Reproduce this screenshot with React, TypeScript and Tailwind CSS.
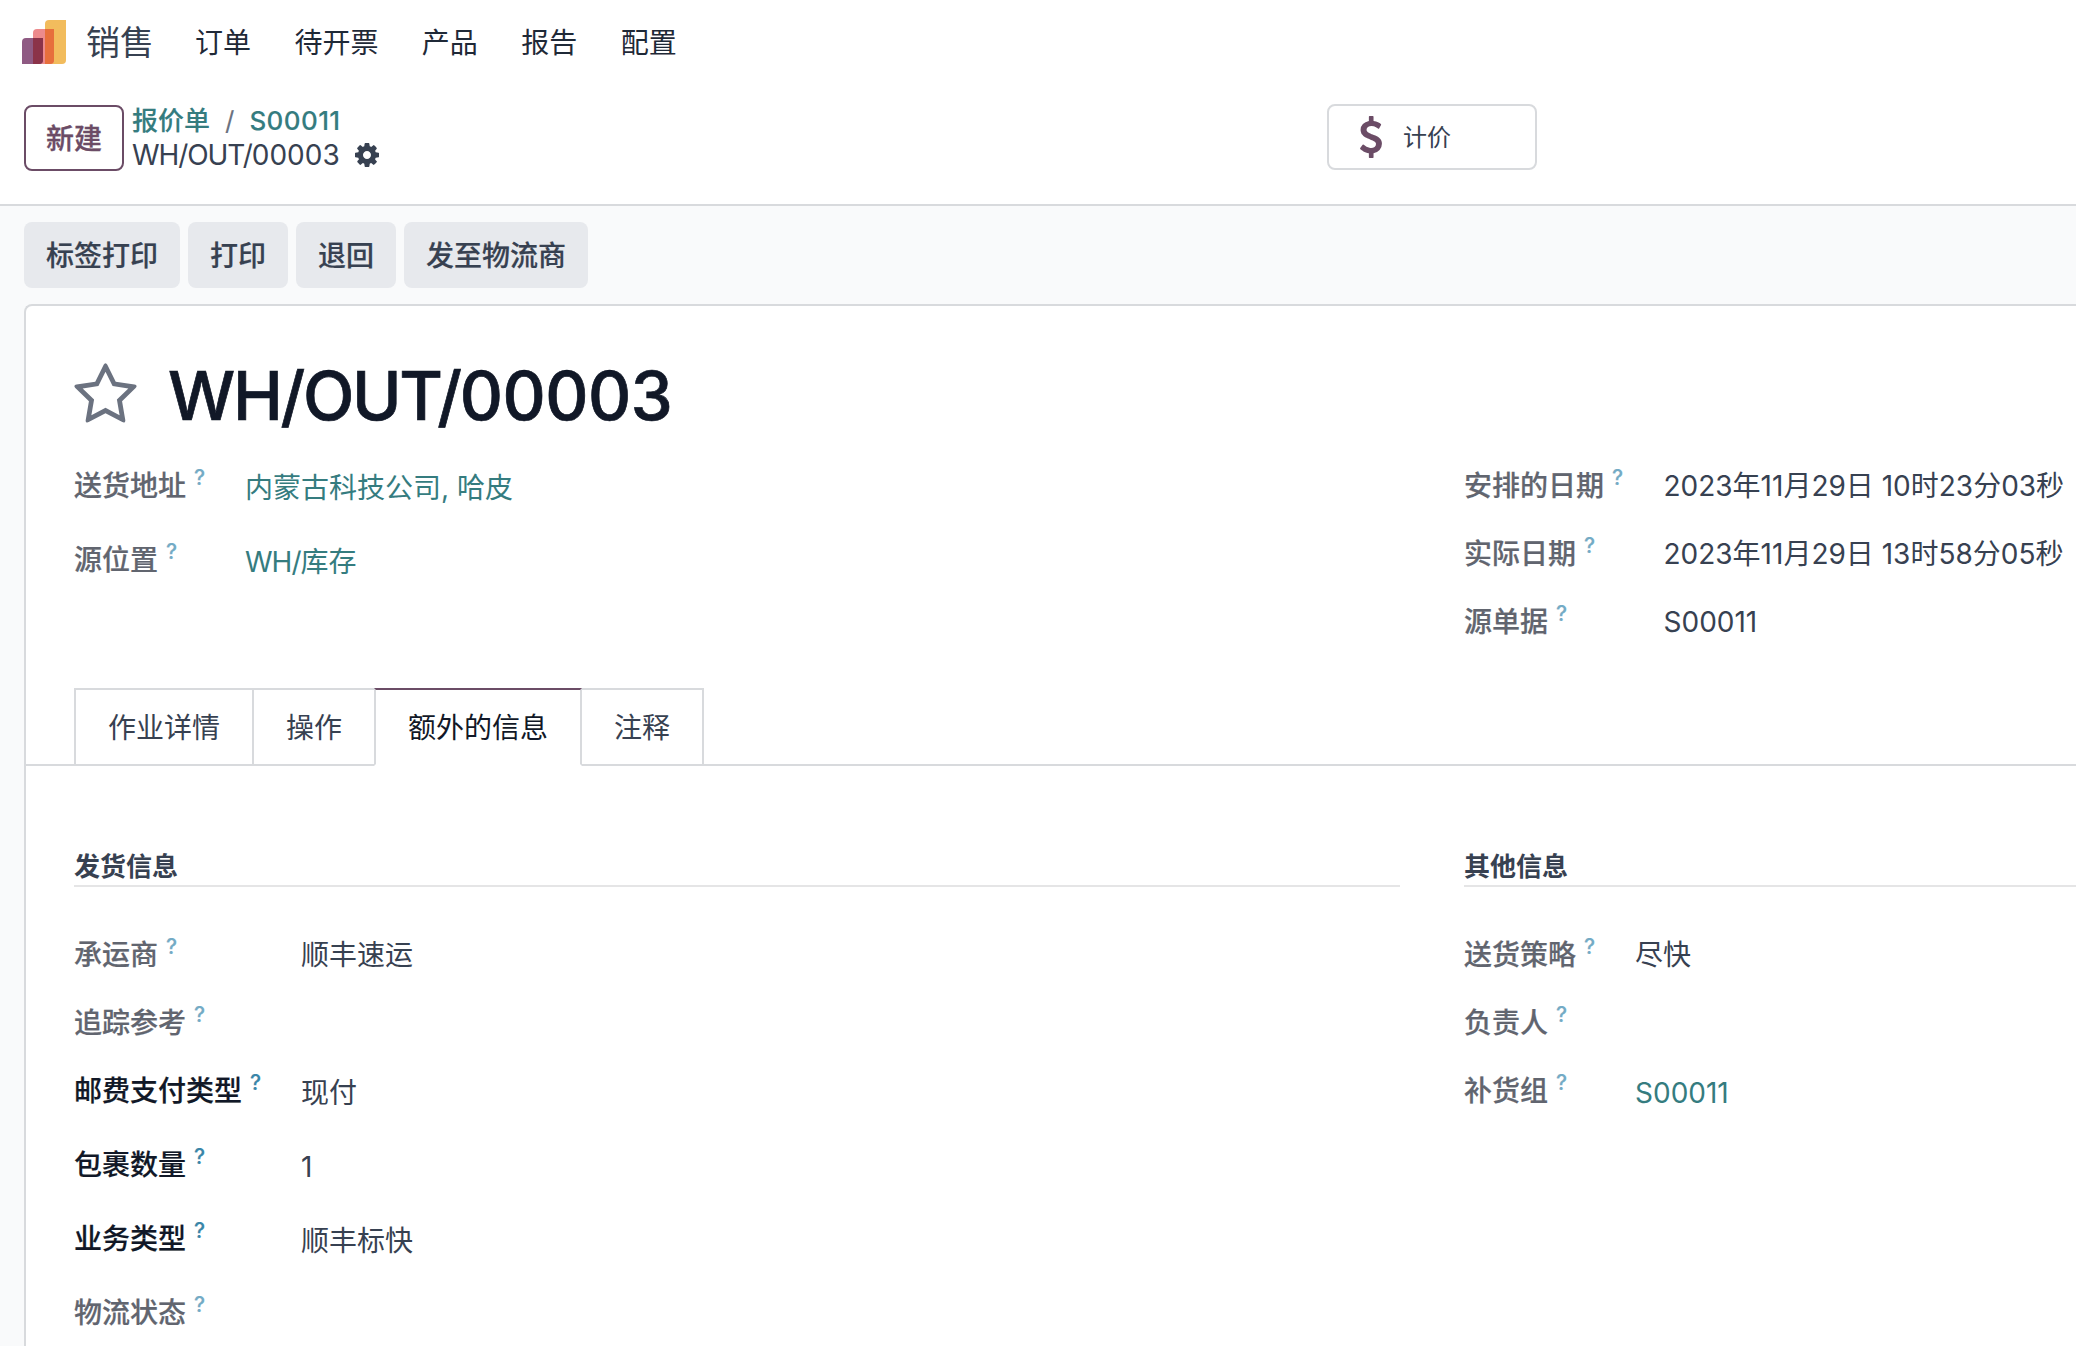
import { useState, type ReactNode } from "react";

type FieldProps = {
  label: string;
  value?: ReactNode;
  link?: boolean;
  required?: boolean;
  low?: boolean;
  labelWidth: string;
  height?: string;
};

const menus = ["订单", "待开票", "产品", "报告", "配置"];
const actions = ["标签打印", "打印", "退回", "发至物流商"];
const tabs = ["作业详情", "操作", "额外的信息", "注释"];

const Logo = () => (
  <svg className="h-11 w-11" viewBox="0 0 44 44">
    <path d="M27 0H44V40a4 4 0 0 1-4 4H23V4a4 4 0 0 1 4-4Z" fill="#f2bc5d" />
    <path d="M15 9H32V40a4 4 0 0 1-4 4H11V13a4 4 0 0 1 4-4Z" fill="#ec8a8c" />
    <path d="M23 9H32V40a4 4 0 0 1-4 4H23Z" fill="#e76f3c" />
    <path d="M4 18H21V40a4 4 0 0 1-4 4H0V22a4 4 0 0 1 4-4Z" fill="#8f5a83" />
    <path d="M11 18H21V40a4 4 0 0 1-4 4H11Z" fill="#8b3349" />
  </svg>
);

const Cog = () => (
  <svg className="h-7 w-7" viewBox="0 0 1792 1792" fill="currentColor">
    <path d="M1152 896q0-106-75-181t-181-75-181 75-75 181 75 181 181 75 181-75 75-181zm512-109v222q0 12-8 23t-20 13l-185 28q-19 54-39 91 35 50 107 138 10 12 10 25t-9 23q-27 37-99 108t-94 71q-12 0-26-9l-138-108q-44 23-91 38-16 136-29 186-7 28-36 28h-222q-14 0-24.5-8.5t-11.5-21.5l-28-184q-49-16-90-37l-141 107q-10 9-25 9-14 0-25-11-126-114-165-168-7-10-7-23 0-12 8-23 15-21 51-66.5t54-70.5q-27-50-41-99l-183-27q-13-2-21-12.5t-8-23.5v-222q0-12 8-23t19-13l186-28q14-46 39-92-40-57-107-138-10-12-10-24 0-10 9-23 26-36 98.5-107.5t94.5-71.5q13 0 26 10l138 107q44-23 91-38 16-136 29-186 7-28 36-28h222q14 0 24.5 8.5t11.5 21.5l28 184q49 16 90 37l142-107q9-9 24-9 13 0 25 10 129 119 165 170 7 8 7 22 0 12-8 23-15 21-51 66.5t-54 70.5q26 50 41 98l183 28q13 2 21 12.5t8 23.5z" />
  </svg>
);

const Dollar = () => (
  <svg className="h-[42px] w-[42px]" viewBox="0 0 1792 1792" fill="currentColor">
    <path d="M1362 1185q0 153-99.5 263.5t-258.5 136.5v175q0 14-9 23t-23 9h-135q-13 0-22.5-9.5t-9.5-22.5v-175q-66-9-127.5-31t-101.5-44.5-74-48-46.5-37.5-17.5-18q-17-21-2-41l103-135q7-10 23-12 15-2 24 9l2 2q113 99 243 125 37 8 74 8 81 0 142.5-43t61.5-122q0-28-15-53t-33.5-42-58.5-37.5-66-32-80-32.5q-39-16-61.5-25t-61.5-26.5-62.5-31-56.5-35.5-53.5-42.5-43.5-49-35.5-58-21-66.5-8.5-78q0-138 98-242t255-134v-180q0-13 9.5-22.5t22.5-9.5h135q14 0 23 9t9 23v176q57 6 110.5 23t87 33.5 63.5 37.5 39 29 15 14q17 18 5 38l-81 146q-8 15-23 16-14 3-27-7-3-3-14.5-12t-39-26.5-58.5-32-74.5-26-85.5-11.5q-95 0-155 43t-60 111q0 26 8.5 48t29.5 41.5 39.5 33 56 31 60.5 27 70 27.5q53 20 81 31.5t76 35 75.5 42.5 62 50 53 63.5 31.5 76.5 13 94z" />
  </svg>
);

const Star = () => (
  <svg className="h-[67px] w-[67px]" viewBox="0 0 1792 1792" fill="currentColor">
    <path d="M1201 1004l306-297-422-62-189-382-189 382-422 62 306 297-73 421 378-199 377 199zm527-357q0 22-26 48l-363 354 86 500q1 7 1 20 0 50-41 50-19 0-40-12l-449-236-449 236q-22 12-40 12-21 0-31.5-14.5t-10.5-35.5q0-6 2-20l86-500-364-354q-25-27-25-48 0-37 56-46l502-73 225-455q19-41 49-41t49 41l225 455 502 73q56 9 56 46z" />
  </svg>
);

const Field = ({ label, value, link, required, low, labelWidth, height = "h-[68px]" }: FieldProps) => (
  <div className={`flex pt-px ${height}`}>
    <div
      className={`${labelWidth} shrink-0 font-medium [-webkit-text-stroke:0.2px] ${required ? "text-[#111827]" : "text-[#61656f]"}`}
    >
      {label}
      <sup
        className={`ml-2 top-[-11px] text-[21px] leading-none ${required ? "text-[#3a86a8]" : "text-[#74abc5]"}`}
      >
        ?
      </sup>
    </div>
    <div className={`whitespace-nowrap ${low ? "pt-0.5" : ""} ${link ? "text-[#357c7f]" : ""}`}>
      {value}
    </div>
  </div>
);

const SectionTitle = ({ children }: { children: string }) => (
  <div className="mb-[46px] h-[42px] border-b-2 border-[#e5e5e6] pt-0.5 text-[26px] leading-[39px] font-bold">
    {children}
  </div>
);

export default function App() {
  const [activeTab, setActiveTab] = useState("额外的信息");
  const [starred, setStarred] = useState(false);

  return (
    <div className="flex h-[1346px] w-full flex-col overflow-hidden bg-[#f9fafb] font-[Inter,'Noto_Sans_CJK_SC',sans-serif] text-[28px] leading-[42px] text-[#374151]">
      <header className="h-[206px] shrink-0 border-b-2 border-[#d8dadd] bg-white">
        <nav className="flex h-[84px] items-center pl-[22px]">
          <Logo />
          <span className="ml-5 pt-0.5 text-[34px]">销售</span>
          <div className="ml-[41px] flex gap-[43.4px] pt-0.5 text-[#1f2937]">
            {menus.map((m) => (
              <span key={m}>{m}</span>
            ))}
          </div>
        </nav>
        <div className="flex pt-5 pl-6">
          <button className="mt-px h-[66px] w-[100px] rounded-lg border-2 border-[#6b4c66] pt-0.5 font-medium text-[#6b4c66] [-webkit-text-stroke:0.3px]">
            新建
          </button>
          <div className="ml-2 w-[1195px] leading-[34px]">
            <div className="flex text-[26px] font-medium text-[#357c7f] [-webkit-text-stroke:0.1px]">
              <span>报价单</span>
              <span className="pr-[15px] pl-[15px] font-normal text-[#6b7280]">/</span>
              <span className="tracking-[0.4px]">S00011</span>
            </div>
            <div className="flex items-center">
              <span>
                <span className="tracking-[-1.1px]">WH/OUT/</span>00003
              </span>
              <span className="ml-[13px]">
                <Cog />
              </span>
            </div>
          </div>
          <button className="flex h-[66px] w-[210px] items-center rounded-lg border-2 border-[#d8dadd] text-[24px]">
            <span className="ml-[21px] text-[#6b4c66]">
              <Dollar />
            </span>
            <span className="ml-[11px] pt-0.5">计价</span>
          </button>
        </div>
      </header>

      <div className="flex gap-2 py-4 pl-6">
        {actions.map((a) => (
          <button
            key={a}
            className="h-[66px] rounded-lg bg-[#e7e9ed] px-[22px] pt-0.5 font-medium [-webkit-text-stroke:0.2px]"
          >
            {a}
          </button>
        ))}
      </div>

      <main className="ml-6 w-[2816px] flex-1 rounded-tl-lg border-t-2 border-l-2 border-[#d8dadd] bg-white">
        <div className="flex h-[158px] items-center pt-5 pl-[46px]">
          <button
            className={starred ? "text-[#f3cc00]" : "text-[#6b7280]"}
            onClick={() => setStarred(!starred)}
          >
            <Star />
          </button>
          <h1 className="ml-[29px] text-[67px] leading-none font-medium tracking-[-0.5px] text-[#111827] [-webkit-text-stroke:0.7px]">
            <span className="tracking-[-2.3px]">WH/OUT/</span>00003
          </h1>
        </div>

        <div className="grid h-[224px] grid-cols-[1326px_1326px] gap-16 pl-12">
          <div>
            <Field label="送货地址" value="内蒙古科技公司, 哈皮" link low labelWidth="w-[171px]" height="h-[74px]" />
            <Field
              label="源位置"
              value={
                <>
                  <span className="tracking-[-1px]">WH/</span>库存
                </>
              }
              link
              low
              labelWidth="w-[171px]"
            />
          </div>
          <div>
            <Field label="安排的日期" value="2023年11月29日 10时23分03秒" labelWidth="w-[199.5px]" />
            <Field label="实际日期" value="2023年11月29日 13时58分05秒" labelWidth="w-[199.5px]" />
            <Field label="源单据" value="S00011" labelWidth="w-[199.5px]" />
          </div>
        </div>

        <div className="flex h-[78px] border-b-2 border-[#d8dadd] pl-12">
          {tabs.map((t) => (
            <button
              key={t}
              onClick={() => setActiveTab(t)}
              className={`-mr-0.5 h-[78px] border-2 px-8 pt-0.5 ${
                t === activeTab
                  ? "z-10 border-x-[#d8dadd] border-t-[#6b4c66] border-b-white bg-white text-[#111827]"
                  : "border-[#d8dadd]"
              }`}
            >
              {t}
            </button>
          ))}
        </div>

        <div className="grid grid-cols-[1326px_1326px] gap-16 pt-[79px] pl-12">
          <div>
            <SectionTitle>发货信息</SectionTitle>
            <Field label="承运商" value="顺丰速运" labelWidth="w-[227px]" />
            <Field label="追踪参考" labelWidth="w-[227px]" />
            <Field label="邮费支付类型" value="现付" required low labelWidth="w-[227px]" height="h-[74px]" />
            <Field label="包裹数量" value="1" required low labelWidth="w-[227px]" height="h-[74px]" />
            <Field label="业务类型" value="顺丰标快" required low labelWidth="w-[227px]" height="h-[74px]" />
            <Field label="物流状态" labelWidth="w-[227px]" />
          </div>
          <div>
            <SectionTitle>其他信息</SectionTitle>
            <Field label="送货策略" value="尽快" labelWidth="w-[171px]" />
            <Field label="负责人" labelWidth="w-[171px]" />
            <Field label="补货组" value="S00011" link low labelWidth="w-[171px]" />
          </div>
        </div>
      </main>
    </div>
  );
}
